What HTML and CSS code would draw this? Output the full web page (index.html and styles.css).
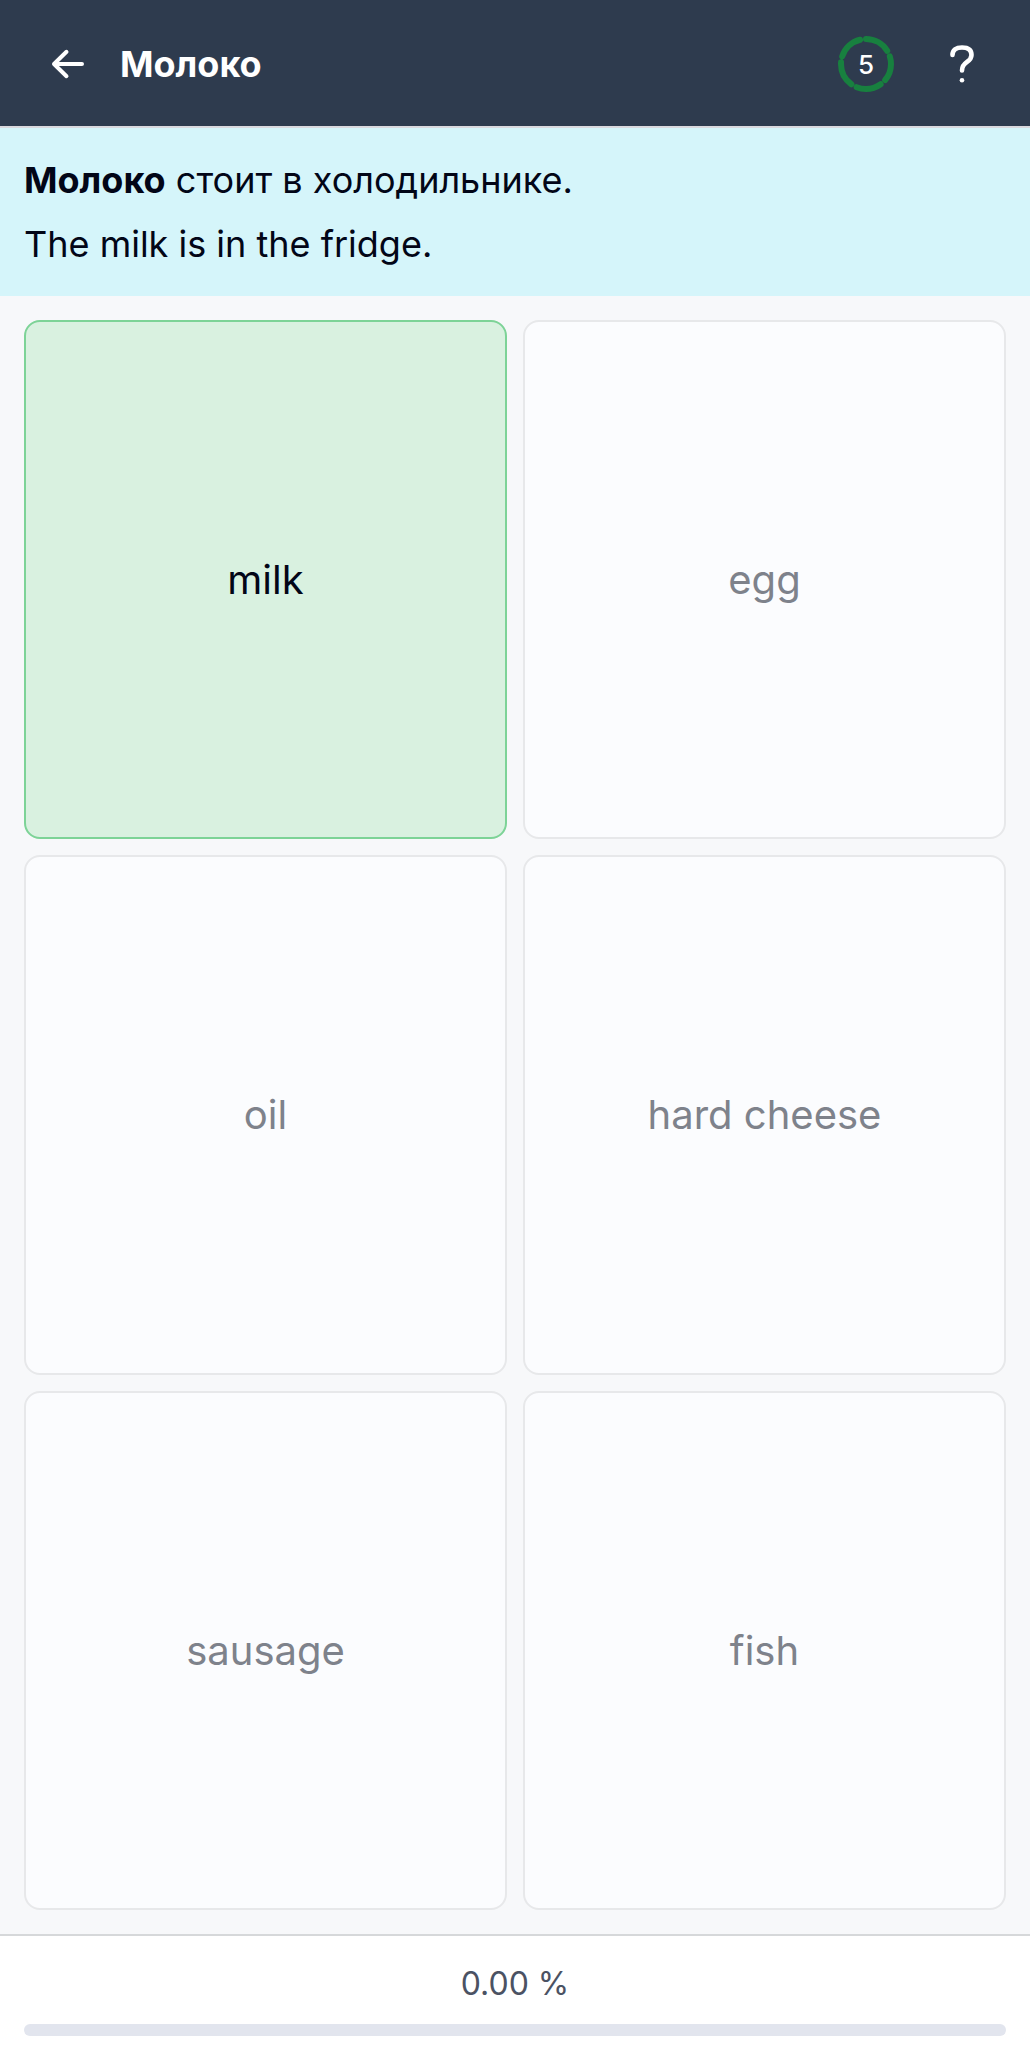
FILE: index.html
```html
<!DOCTYPE html>
<html lang="en">
<head>
    <meta charset="utf-8">
    <meta name="viewport" content="width=device-width, initial-scale=1">
    <title>Молоко</title>
    <link rel="stylesheet" href="styles.css">
</head>
<body>
    <header class="topbar">
        <button type="button" class="icon-btn" aria-label="Back">
            <svg width="36" height="36" viewBox="0 0 36 36" fill="none" stroke="currentColor" stroke-width="4" stroke-linecap="round" stroke-linejoin="round"><path d="M32 18H4M16.5 5.8L4 18l12.500 12.200"/></svg>
        </button>
        <h1 class="title" lang="ru">Молоко</h1>
        <div class="counter">
            <svg class="ring" width="56" height="56" viewBox="0 0 56 56" fill="none"><circle cx="28" cy="28" r="25" pathLength="360" stroke-dasharray="58 14" transform="rotate(-90 28 28)"/></svg>
            <span>5</span>
        </div>
        <button type="button" class="icon-btn" aria-label="Help">
            <svg width="36" height="40" viewBox="0 0 36 40" fill="none" stroke="currentColor" stroke-width="4.600" stroke-linecap="round" stroke-linejoin="round"><path d="M8.500 11C8.500 6 12 3.500 18 3.500S27.500 6 27.500 11C27.500 19 18 17 18 26.500"/><circle cx="18" cy="36.300" r="2.300" fill="currentColor" stroke="none"/></svg>
        </button>
    </header>

    <section class="sentence">
        <p lang="ru"><strong>Молоко</strong> стоит в холодильнике.</p>
        <p>The milk is in the fridge.</p>
    </section>

    <main class="answers">
        <button type="button" class="answer correct">milk</button>
        <button type="button" class="answer">egg</button>
        <button type="button" class="answer">oil</button>
        <button type="button" class="answer">hard cheese</button>
        <button type="button" class="answer">sausage</button>
        <button type="button" class="answer">fish</button>
    </main>

    <footer class="footer">
        <label for="progress">0.00 %</label>
        <progress id="progress" value="0" max="100"></progress>
    </footer>
</body>
</html>
```
FILE: styles.css
```css
* { box-sizing: border-box; }
body { display: flex; flex-direction: column; min-height: 100vh; margin: 0; background: #f7f8fa; color: #020617; font-family: Inter, sans-serif; }
button { font: inherit; }

.topbar { display: flex; align-items: center; height: 128px; padding: 2px 24px 0; border-bottom: 2px solid #d9d9de; background: #2e3b4e; color: #fff; }
.icon-btn { display: flex; align-items: center; justify-content: center; width: 88px; height: 88px; padding: 0; border: 0; background: none; color: inherit; }
.title { flex: 1; margin: 0 8px; font-size: 36px; font-weight: 700; }
.counter { display: grid; place-items: center; margin-right: 24px; font-size: 26px; font-weight: 500; }
.counter > * { grid-area: 1 / 1; }
.ring circle { stroke: #18803f; stroke-width: 6; stroke-linecap: round; }

.sentence { padding: 20px 24px; background: #d5f5fa; font-size: 36px; line-height: 64px; }
.sentence p { margin: 0; }

.answers { flex: 1; display: grid; grid-template-columns: 1fr 1fr; grid-auto-rows: 1fr; gap: 16px; padding: 24px; }
.answer { border: 2px solid #e7e8ea; border-radius: 16px; background: #fbfcfe; color: #7e828b; font-size: 40px; }
.answer.correct { border-color: #7dd397; background: #d9f1e0; color: #020617; }

.footer { display: flex; flex-direction: column; align-items: center; padding: 24px; border-top: 2px solid #d6d8da; background: #fff; color: #4b5263; font-size: 32px; line-height: 48px; }
.footer progress { width: 100%; height: 12px; margin-top: 16px; border: 0; border-radius: 6px; background: #e2e5ee; overflow: hidden; appearance: none; }
.footer progress::-webkit-progress-bar { background: #e2e5ee; }
.footer progress::-webkit-progress-value { background: #18803f; }
```
